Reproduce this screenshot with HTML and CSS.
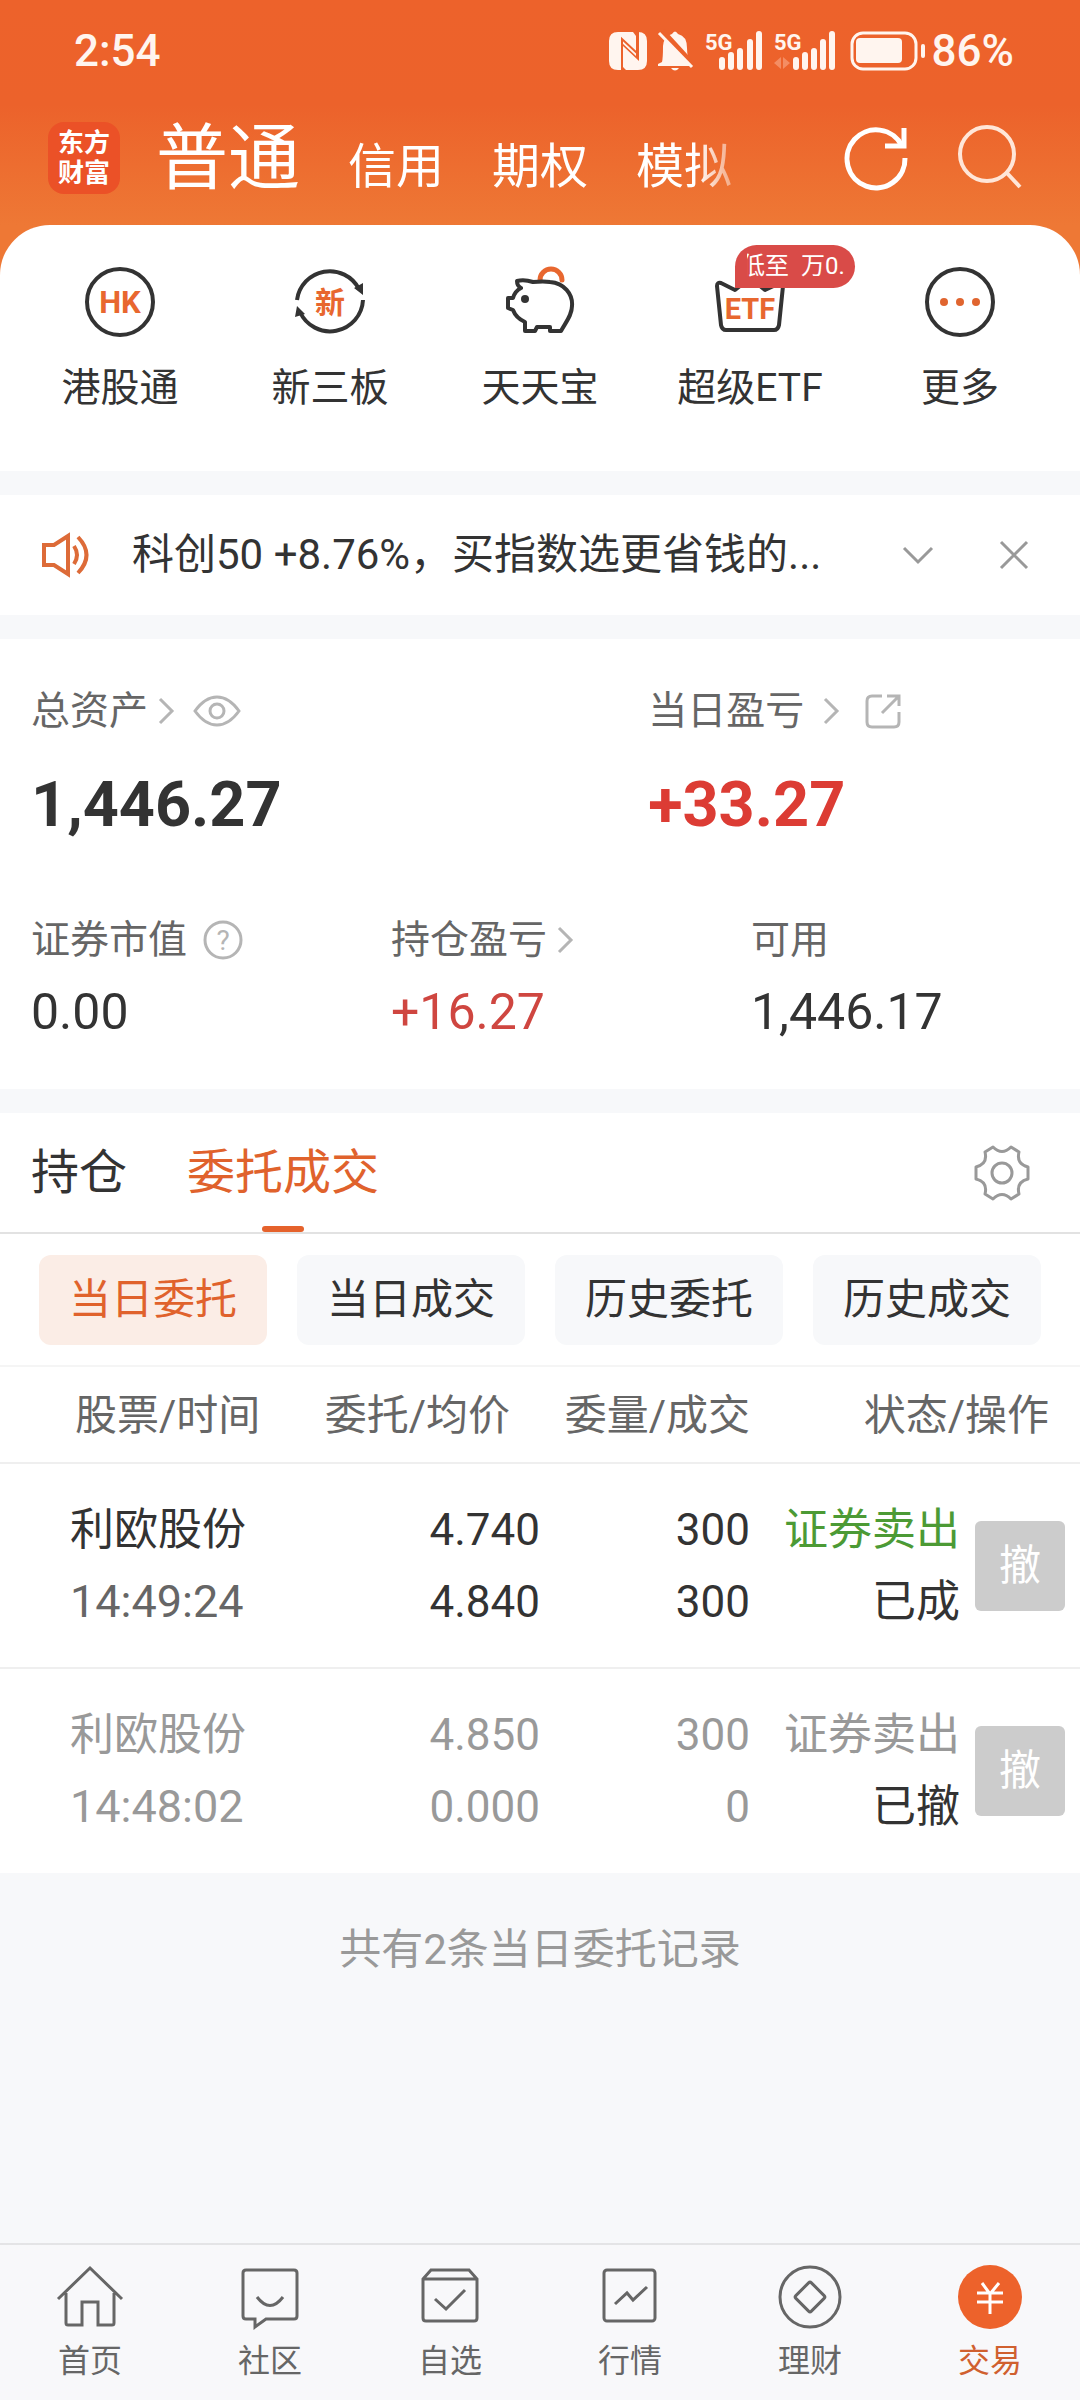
FILE: index.html
```html
<!DOCTYPE html>
<html lang="zh-CN">
<head>
<meta charset="utf-8">
<meta name="viewport" content="width=device-width, initial-scale=1">
<title>交易</title>
<link rel="stylesheet" href="styles.css">
</head>
<body>

  <!-- Header -->
  <header class="header">
    <div class="status">
      <span class="clock">2:54</span>
      <div class="status-icons">
        <svg width="38" height="40" viewBox="0 0 38 40">
          <path d="M9 1H24L27 5V25L12 11V39H9Q0 39 0 30V10Q0 1 9 1Z" fill="#fff5ef"/>
          <path d="M29 1Q38 1 38 10V30Q38 39 29 39H17L14 36V15L30 30V6Z" fill="#fff5ef"/>
          <path d="M13 38V8L29 23V1" fill="none" stroke="#ec622b" stroke-width="2"/>
        </svg>
        <svg width="36" height="42" viewBox="0 0 36 42">
          <path d="M4 32Q5 28 5 16Q6 6 14 4Q17 -1 20 4Q29 6 29 18Q29 28 33 33V36H0V34Z" fill="#fff5ef"/>
          <path d="M13 38H21Q17 43 13 38Z" fill="#fff5ef"/>
          <path d="M4 1L36 36" stroke="#ec622b" stroke-width="6"/>
          <path d="M1 3L34 37" stroke="#fff5ef" stroke-width="3"/>
        </svg>
        <svg width="58" height="42" viewBox="0 0 58 42">
          <text x="0" y="20" class="net">5G</text>
          <path d="M17 30V37M26 25V37M35 21V37M45 12V37M54 4V37" class="bars"/>
        </svg>
        <svg width="62" height="42" viewBox="0 0 62 42">
          <text x="0" y="20" class="net">5G</text>
          <path d="M0 33L7 27V39M9 27V39L16 33Z" fill="#f48d63"/>
          <path d="M22 30V37M31 25V37M40 21V37M49 12V37M58 4V37" class="bars"/>
        </svg>
        <svg class="battery" width="76" height="40" viewBox="0 0 76 40">
          <rect x="2" y="2" width="64" height="36" rx="11" fill="none" stroke="#fff5ef" stroke-width="3"/>
          <rect x="6" y="7" width="46" height="25" rx="4" fill="#fff5ef"/>
          <rect x="71" y="13" width="4" height="14" rx="2" fill="#fff5ef"/>
        </svg>
        <span>86%</span>
      </div>
    </div>

    <div class="topbar">
      <div class="logo">东方<br>财富</div>
      <nav class="accounts">
        <a class="current" href="#">普通</a>
        <a href="#">信用</a>
        <a href="#">期权</a>
        <a href="#">模拟</a>
      </nav>
      <button class="icon-btn" aria-label="刷新">
        <svg width="68" height="68" viewBox="0 0 68 68" fill="none" stroke="#fff" stroke-width="5">
          <path d="M63 34A29 29 0 1 1 60 22"/>
          <path d="M62 4V22H43"/>
        </svg>
      </button>
      <button class="icon-btn search" aria-label="搜索">
        <svg width="68" height="68" viewBox="0 0 68 68" fill="none" stroke="#ffe6d8" stroke-width="4">
          <circle cx="31" cy="30" r="27"/>
          <path d="M50 48L64 63"/>
        </svg>
      </button>
    </div>
  </header>

  <!-- Quick menu -->
  <nav class="menu">
    <a href="#">
      <svg width="72" height="72" viewBox="0 0 72 72">
        <circle cx="36" cy="36" r="33" class="dark"/>
        <text x="36" y="47" class="mark mark-hk">HK</text>
      </svg>
      港股通
    </a>
    <a href="#">
      <svg width="72" height="72" viewBox="0 0 72 72">
        <path d="M3 34A33 33 0 0 1 65 23M69 34A33 33 0 0 1 6 46" class="dark"/>
        <path d="M69 29L60 22L69 17ZM3 40L1 51L11 48Z" fill="#333"/>
        <text x="36" y="47" class="mark mark-xin">新</text>
      </svg>
      新三板
    </a>
    <a href="#">
      <svg width="72" height="72" viewBox="0 0 72 72">
        <path d="M36 14A11 11 0 0 1 58 14" class="coin"/>
        <path d="M13 15Q20 13 29 16Q40 15 46 16C60 17 69 28 68 40C68 49 62 56 57 65H46V61H33L31 65H21V56Q12 52 9 44L4 42V32H9Q11 25 17 22Q13 20 13 15Z" class="dark"/>
        <circle cx="21" cy="33" r="4" fill="#333"/>
      </svg>
      天天宝
    </a>
    <a href="#">
      <svg width="72" height="72" viewBox="0 0 72 72">
        <path d="M7 17L21 24L36 12L51 24L66 17Q70 16 69 20L65 59Q64 64 60 64H12Q8 64 7 59L3 20Q3 16 7 17Z" class="dark"/>
        <text x="36" y="53" class="mark mark-etf">ETF</text>
      </svg>
      超级ETF
      <span class="badge"><span class="badge-text">低至&nbsp; 万0.</span></span>
    </a>
    <a href="#">
      <svg width="72" height="72" viewBox="0 0 72 72">
        <circle cx="36" cy="36" r="33" class="dark"/>
        <g fill="#e0652f"><circle cx="20" cy="36" r="4"/><circle cx="36" cy="36" r="4"/><circle cx="52" cy="36" r="4"/></g>
      </svg>
      更多
    </a>
  </nav>

  <!-- Notice -->
  <div class="notice">
    <svg width="48" height="44" viewBox="0 0 48 44" fill="none" stroke="#dd6b38" stroke-width="4">
      <path d="M2 12H12L26 3V41L12 32H2Z"/>
      <path d="M32 13Q38 22 32 31M36 4Q53 22 36 40"/>
    </svg>
    <span class="notice-text">科创50 +8.76%，买指数选更省钱的...</span>
    <button aria-label="展开">
      <svg width="34" height="34" viewBox="0 0 34 34" class="grey"><path d="M3 10L17 24L31 10"/></svg>
    </button>
    <button aria-label="关闭">
      <svg width="34" height="34" viewBox="0 0 34 34" class="grey"><path d="M4 4L30 30M30 4L4 30"/></svg>
    </button>
  </div>

  <!-- Assets -->
  <section class="assets">
    <div class="assets-main">
      <div>
        <div class="label">总资产
          <svg width="22" height="30" viewBox="0 0 22 30" class="light"><path d="M5 3L17 15L5 27"/></svg>
          <svg class="light gap" width="48" height="34" viewBox="0 0 48 34">
            <path d="M2 17Q12 3 24 3T46 17Q36 31 24 31T2 17Z"/>
            <circle cx="24" cy="17" r="7"/>
          </svg>
        </div>
        <div class="total">1,446.27</div>
      </div>
      <div>
        <div class="label">当日盈亏
          <svg class="light gap" width="22" height="30" viewBox="0 0 22 30"><path d="M5 3L17 15L5 27"/></svg>
          <svg class="light gap-wide" width="36" height="36" viewBox="0 0 36 36">
            <path d="M17 3H7Q2 3 2 8V29Q2 34 7 34H29Q34 34 34 29V19"/>
            <path d="M22 3H34V13M33 4L17 20"/>
          </svg>
        </div>
        <div class="total up">+33.27</div>
      </div>
    </div>
    <div class="assets-sub">
      <div>
        <div class="label">证券市值
          <svg class="gap" width="40" height="40" viewBox="0 0 40 40">
            <circle cx="20" cy="20" r="18" class="light"/>
            <text x="20" y="30" class="help">?</text>
          </svg>
        </div>
        <div class="value">0.00</div>
      </div>
      <div>
        <div class="label">持仓盈亏
          <svg width="22" height="30" viewBox="0 0 22 30" class="light"><path d="M5 3L17 15L5 27"/></svg>
        </div>
        <div class="value up">+16.27</div>
      </div>
      <div>
        <div class="label">可用</div>
        <div class="value">1,446.17</div>
      </div>
    </div>
  </section>

  <!-- Orders -->
  <section class="orders">
    <div class="tabs">
      <button class="tablink">持仓</button>
      <button class="tablink active">委托成交</button>
      <button class="settings" aria-label="设置">
        <svg width="60" height="60" viewBox="0 0 60 60" fill="none" stroke="#999" stroke-width="3" stroke-linejoin="round">
          <path d="M21 4Q30 13 39 4L47 9Q44 21 56 24V36Q44 39 47 51L39 56Q30 47 21 56L13 51Q16 39 4 36V24Q16 21 13 9Z"/>
          <circle cx="30" cy="30" r="10"/>
        </svg>
      </button>
    </div>

    <div class="chips">
      <button class="chip active">当日委托</button>
      <button class="chip">当日成交</button>
      <button class="chip">历史委托</button>
      <button class="chip">历史成交</button>
    </div>

    <table class="list">
      <colgroup>
        <col>
        <col class="col-price">
        <col class="col-num">
        <col class="col-state">
        <col class="col-op">
      </colgroup>
      <thead>
        <tr>
          <th class="name">股票/时间</th>
          <th class="price">委托/均价</th>
          <th>委量/成交</th>
          <th class="state" colspan="2">状态/操作</th>
        </tr>
      </thead>
      <tbody>
        <tr>
          <td class="name">利欧股份<br><span class="time">14:49:24</span></td>
          <td>4.740<br>4.840</td>
          <td>300<br>300</td>
          <td><span class="sell">证券卖出</span><br>已成</td>
          <td class="op"><button disabled>撤</button></td>
        </tr>
        <tr class="cancelled">
          <td class="name">利欧股份<br><span class="time">14:48:02</span></td>
          <td>4.850<br>0.000</td>
          <td>300<br>0</td>
          <td><span class="sell">证券卖出</span><br><span class="result">已撤</span></td>
          <td class="op"><button disabled>撤</button></td>
        </tr>
      </tbody>
    </table>
  </section>

  <p class="summary">共有2条当日委托记录</p>

  <!-- Bottom navigation -->
  <nav class="bottom">
    <a href="#">
      <svg width="68" height="68" viewBox="0 0 68 68" class="line">
        <path d="M2 36L34 5L66 36M10 30V60Q10 62 12 62H26V39H42V62H56Q58 62 58 60V30"/>
      </svg>
      首页
    </a>
    <a href="#">
      <svg width="68" height="68" viewBox="0 0 68 68" class="line">
        <path d="M10 7H58Q61 7 61 10V53Q61 56 58 56H30L19 64V56H10Q7 56 7 53V10Q7 7 10 7Z"/>
        <path d="M21 34Q34 51 47 34"/>
      </svg>
      社区
    </a>
    <a href="#">
      <svg width="68" height="68" viewBox="0 0 68 68" class="line">
        <path d="M7 16L15 7H53L61 16V55Q61 58 58 58H10Q7 58 7 55ZM7 16H61"/>
        <path d="M19 36L30 46L49 27"/>
      </svg>
      自选
    </a>
    <a href="#">
      <svg width="68" height="68" viewBox="0 0 68 68" class="line">
        <rect x="8" y="7" width="51" height="51" rx="3"/>
        <path d="M19 41L31 30L37 37L51 24"/>
      </svg>
      行情
    </a>
    <a href="#">
      <svg width="68" height="68" viewBox="0 0 68 68" class="line">
        <circle cx="34" cy="34" r="30"/>
        <rect x="23" y="23" width="22" height="22" rx="2" transform="rotate(45 34 34)"/>
      </svg>
      理财
    </a>
    <a class="active" href="#">
      <svg width="68" height="68" viewBox="0 0 68 68">
        <circle cx="34" cy="34" r="32" fill="#ed622b"/>
        <path d="M26 20L34 31L43 20M34 30V51M21 30H47M21 39H47" fill="none" stroke="#fff" stroke-width="3"/>
      </svg>
      交易
    </a>
  </nav>

</body>
</html>
```

FILE: styles.css
```css
* {box-sizing: border-box}

body {
  display: flex;
  flex-direction: column;
  min-height: 100vh;
  margin: 0;
  font-family: Roboto, "Noto Sans CJK SC", sans-serif;
  color: #333;
  background-color: #f7f8fa;
}

a {
  color: inherit;
  text-decoration: none;
}

button {
  padding: 0;
  border: none;
  background: none;
  color: inherit;
  font-family: inherit;
  cursor: pointer;
}

svg {
  display: block;
  flex: none;
  overflow: visible;
}

/* Header */
.header {
  padding-bottom: 50px;
  color: #fff;
  background: linear-gradient(#ed622b 0, #ec622b 105px, #ee7835 225px);
}

/* Status bar */
.status {
  display: flex;
  justify-content: space-between;
  align-items: center;
  height: 102px;
  padding: 0 66px 0 74px;
  font-size: 44px;
  font-weight: 500;
  color: #fff5ef;
}

.status-icons {
  display: flex;
  align-items: center;
  gap: 11px;
}

.battery {
  margin-left: 3px;
  margin-right: -5px;
}

.net {
  font-size: 22px;
  font-weight: 700;
  fill: #fff5ef;
}

.bars {
  stroke: #fff5ef;
  stroke-width: 6px;
  stroke-linecap: round;
}

.topbar {
  display: flex;
  align-items: center;
  height: 123px;
  padding: 0 56px 12px 48px;
}

.logo {
  width: 72px;
  height: 72px;
  padding-top: 6px;
  border-radius: 16px;
  background-color: #eb5127;
  font-size: 26px;
  font-weight: 700;
  line-height: 30px;
  text-align: center;
}

/* Account types, the last one fades out at the edge */
.accounts {
  display: flex;
  flex: 1;
  align-items: baseline;
  gap: 48px;
  margin-left: 36px;
  padding-top: 10px;
  font-size: 48px;
  line-height: 80px;
  -webkit-mask-image: linear-gradient(to right, #000 540px, transparent 600px);
  mask-image: linear-gradient(to right, #000 540px, transparent 600px);
}

.accounts .current {
  font-size: 72px;
}

.search {
  margin-left: 46px;
}

/* Quick menu */
.menu {
  display: flex;
  margin-top: -50px;
  padding: 41px 15px 54px;
  border-radius: 50px 50px 0 0;
  background-color: #fff;
}

.menu a {
  position: relative;
  display: flex;
  flex: 1;
  flex-direction: column;
  align-items: center;
  gap: 22px;
  font-size: 39px;
  line-height: 57px;
}

.dark {
  fill: none;
  stroke: #333;
  stroke-width: 4px;
  stroke-linejoin: round;
}

.coin {
  fill: none;
  stroke: #e8672f;
  stroke-width: 5px;
  stroke-linecap: round;
}

.mark {
  font-weight: 700;
  fill: #e8672f;
  text-anchor: middle;
}

.mark-hk {font-size: 31px}
.mark-xin {font-size: 30px}
.mark-etf {font-size: 29px}

.badge {
  position: absolute;
  top: -21px;
  left: 50%;
  width: 120px;
  height: 43px;
  margin-left: -15px;
  padding: 0 10px 0 12px;
  border-radius: 22px 22px 22px 0;
  background-color: #d94b48;
  color: #fff;
  font-size: 24px;
  line-height: 43px;
}

.badge-text {
  display: block;
  overflow: hidden;
  text-indent: -6px;
  white-space: nowrap;
}

/* Notice */
.notice {
  display: flex;
  align-items: center;
  height: 120px;
  margin-top: 24px;
  padding: 0 49px 0 42px;
  background-color: #fff;
  font-size: 42px;
  line-height: 60px;
}

.notice-text {
  flex: 1;
  margin-left: 42px;
  white-space: nowrap;
}

.notice button {
  margin-left: 62px;
}

.grey {
  fill: none;
  stroke: #999;
  stroke-width: 3px;
}

.light {
  fill: none;
  stroke: #b5b5b5;
  stroke-width: 3px;
}

/* Assets */
.assets {
  margin-top: 24px;
  padding: 42px 0 46px;
  background-color: #fff;
}

.assets-main {
  display: grid;
  grid-template-columns: 4fr 3fr;
}

.assets-sub {
  display: grid;
  grid-template-columns: repeat(3, 1fr);
  margin-top: 65px;
}

.assets-main > div,
.assets-sub > div {
  padding-left: 31px;
}

.label {
  display: flex;
  align-items: center;
  gap: 7px;
  height: 60px;
  color: #666;
  font-size: 39px;
  line-height: 60px;
}

.label .gap {margin-left: 9px}
.label .gap-wide {margin-left: 16px}

.help {
  fill: #b5b5b5;
  font-size: 28px;
  text-anchor: middle;
}

.total {
  margin-top: 24px;
  font-size: 63px;
  font-weight: 700;
  line-height: 80px;
}

.value {
  margin-top: 11px;
  font-size: 50px;
  line-height: 62px;
}

.total.up {color: #dc3c34}
.value.up {color: #cf4640}

/* Tabs */
.orders {
  margin-top: 24px;
  background-color: #fff;
}

.tabs {
  display: flex;
  align-items: center;
  gap: 60px;
  height: 121px;
  padding: 0 48px 0 31px;
  border-bottom: 2px solid #e2e2e2;
}

.tablink {
  position: relative;
  height: 119px;
  font-size: 48px;
  line-height: 119px;
}

.tablink.active {
  color: #e0622c;
}

.tablink.active::after {
  content: "";
  position: absolute;
  bottom: 0;
  left: 50%;
  width: 42px;
  height: 6px;
  margin-left: -21px;
  border-radius: 3px;
  background-color: #e5622c;
}

.settings {
  margin-left: auto;
}

.chips {
  display: grid;
  grid-template-columns: repeat(4, 1fr);
  gap: 30px;
  padding: 21px 39px 20px;
}

.chip {
  height: 90px;
  border-radius: 12px;
  background-color: #f7f8fa;
  font-size: 42px;
  line-height: 90px;
}

.chip.active {
  background-color: #fbede6;
  color: #e0622c;
}

/* Order list */
.list {
  width: 100%;
  table-layout: fixed;
  border-collapse: collapse;
  font-size: 44px;
  line-height: 72px;
  text-align: right;
}

.col-price {width: 250px}
.col-num {width: 210px}
.col-state {width: 210px}
.col-op {width: 120px}

.list th {
  height: 97px;
  padding: 2px 0 0;
  border-top: 2px solid #f5f5f5;
  color: #666;
  font-size: 42px;
  font-weight: 400;
}

.list td {
  height: 205px;
  padding: 0;
  border-top: 2px solid #efefef;
  white-space: nowrap;
}

.list .name {
  padding-left: 70px;
  text-align: left;
}

.list th.name {padding-left: 75px}
.list th.price {padding-right: 30px}
.list th.state {padding-right: 31px}

.time {
  color: #666;
  font-size: 45px;
}

.sell {color: #4c9a35}

.cancelled,
.cancelled .time,
.cancelled .sell {
  color: #999;
}

.cancelled .result {color: #333}

.list td.op {
  padding-right: 15px;
}

.op button {
  display: block;
  width: 90px;
  height: 90px;
  margin-left: auto;
  border-radius: 6px;
  background-color: #ccc;
  color: #fff;
  font-size: 42px;
  line-height: 90px;
}

.summary {
  margin: 47px 0 0;
  color: #999;
  font-size: 42px;
  line-height: 60px;
  text-align: center;
}

/* Bottom navigation */
.bottom {
  display: flex;
  margin-top: auto;
  height: 157px;
  padding-top: 18px;
  border-top: 2px solid #e4e4e6;
  background-color: #f8f8fa;
  color: #666;
}

.bottom a {
  display: flex;
  flex: 1;
  flex-direction: column;
  align-items: center;
  gap: 6px;
  font-size: 32px;
  line-height: 48px;
}

.bottom .active {
  color: #d0602f;
}

.line {
  fill: none;
  stroke: #666;
  stroke-width: 3px;
}
```
